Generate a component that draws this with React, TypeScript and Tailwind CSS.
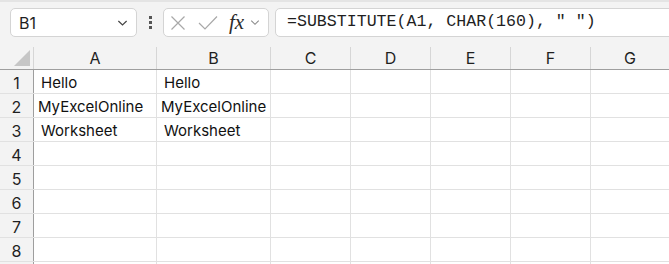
import React from 'react';

// ── Sheet data ──────────────────────────────────────────────────────────────

const columns = [
    { key: 'A', width: 'w-[123px]' },
    { key: 'B', width: 'w-[114px]' },
    { key: 'C', width: 'w-[80px]' },
    { key: 'D', width: 'w-[80px]' },
    { key: 'E', width: 'w-[80px]' },
    { key: 'F', width: 'w-[80px]' },
    { key: 'G', width: 'flex-1' },
];

// lead = text starts with a non-breaking space (CHAR(160))
const cells: Record<number, { text: string; lead?: boolean }[]> = {
    1: [{ text: 'Hello', lead: true }, { text: 'Hello', lead: true }],
    2: [{ text: 'MyExcelOnline' }, { text: 'MyExcelOnline' }],
    3: [{ text: 'Worksheet', lead: true }, { text: 'Worksheet', lead: true }],
};

const rows = [1, 2, 3, 4, 5, 6, 7, 8];

const sans = "font-['Inter','Noto_Sans',sans-serif]";

function Chevron({ className }: { className?: string }) {
    return (
        <svg viewBox="0 0 12 8" className={className} fill="none" stroke="currentColor" strokeWidth="1.3">
            <path d="M1.5 1.8 L6 6.2 L10.5 1.8" />
        </svg>
    );
}

// ── Formula bar ─────────────────────────────────────────────────────────────

function FormulaBar() {
    return (
        <div className="h-[45px] bg-[#f3f3f3] pt-[6px]">
            <div className="flex h-[29px] items-center pl-[10px]">
                <div className="flex h-[29px] w-[127px] items-center justify-between rounded-[5px] border border-[#d4d4d4] bg-white pl-[8px] pr-[8px]">
                    <span className={`${sans} text-[16px] text-[#1f1f1f]`}>B1</span>
                    <Chevron className="h-[8px] w-[11px] text-[#444]" />
                </div>
                <div className="flex w-[26px] flex-col items-center justify-center gap-[2px]">
                    <span className="h-[3px] w-[3px] bg-[#555]" />
                    <span className="h-[3px] w-[3px] bg-[#555]" />
                    <span className="h-[3px] w-[3px] bg-[#555]" />
                </div>
                <div className="flex h-[29px] w-[106px] items-center rounded-[5px] border border-[#d4d4d4] bg-white pl-[6px]">
                    <svg viewBox="0 0 16 16" className="h-[16px] w-[16px] text-[#a8a8a8]" fill="none" stroke="currentColor" strokeWidth="1.2">
                        <path d="M1.5 1.5 L14.5 14.5 M14.5 1.5 L1.5 14.5" />
                    </svg>
                    <svg viewBox="0 0 20 16" className="ml-[12px] h-[16px] w-[20px] text-[#a8a8a8]" fill="none" stroke="currentColor" strokeWidth="1.2">
                        <path d="M1 8 L7 14 L19 1.5" />
                    </svg>
                    <span className="ml-[11px] font-['Liberation_Serif',serif] text-[21px] italic leading-none text-[#2b2b2b]">fx</span>
                    <Chevron className="ml-[6px] h-[7px] w-[10px] text-[#8a8a8a]" />
                </div>
                <div className="ml-[6px] mr-[-6px] flex h-[29px] flex-1 items-center rounded-[5px] border border-[#d4d4d4] bg-white pl-[11px]">
                    <span className="font-['Liberation_Mono',monospace] text-[16.6px] text-[#1f1f1f]">
                        =SUBSTITUTE(A1, CHAR(160), " ")
                    </span>
                </div>
            </div>
        </div>
    );
}

// ── Grid ────────────────────────────────────────────────────────────────────

export default function App() {
    return (
        <div className="h-[264px] w-[669px] overflow-hidden bg-white">
            <div className="h-[2px] bg-[#e4e4e4]" />
            <FormulaBar />

            {/* Column headers */}
            <div className="flex h-[23px] border-b border-[#9e9e9e] bg-[#f3f3f3]">
                <div className="relative w-[34px] shrink-0 border-r border-[#d6d6d6]">
                    <svg viewBox="0 0 16 16" className="absolute bottom-[3px] right-[3px] h-[16px] w-[16px]">
                        <path d="M16 0 L16 16 L0 16 Z" fill="#c6c6c6" />
                    </svg>
                </div>
                {columns.map((c) => (
                    <div
                        key={c.key}
                        className={`${c.width} ${c.key !== 'G' ? 'shrink-0 border-r border-[#d6d6d6]' : ''} flex items-center justify-center ${sans} text-[16px] text-[#1f1f1f]`}
                    >
                        {c.key}
                    </div>
                ))}
            </div>

            {/* Rows */}
            {rows.map((r) => (
                <div key={r} className="flex h-[24px] border-b border-[#e1e1e1]">
                    <div className={`flex w-[34px] shrink-0 items-center justify-center border-r border-[#9e9e9e] bg-[#f3f3f3] pt-[3px] ${sans} text-[16px] text-[#1f1f1f]`}>
                        {r}
                    </div>
                    {columns.map((c, i) => {
                        const cell = cells[r]?.[i];
                        return (
                            <div
                                key={c.key}
                                className={`${c.width} ${c.key !== 'G' ? 'shrink-0 border-r border-[#e1e1e1]' : ''} flex items-center overflow-hidden whitespace-nowrap pl-[4px] pt-[4px] ${sans} text-[15px] text-[#111]`}
                            >
                                {cell?.lead && <span className="inline-block w-[3px]">{'\u00a0'}</span>}
                                {cell?.text ?? ''}
                            </div>
                        );
                    })}
                </div>
            ))}

            {/* Partial row 9 */}
            <div className="flex h-[10px]">
                <div className="w-[34px] shrink-0 border-r border-[#9e9e9e] bg-[#f3f3f3]" />
                {columns.map((c) => (
                    <div key={c.key} className={`${c.width} ${c.key !== 'G' ? 'shrink-0 border-r border-[#e1e1e1]' : ''}`} />
                ))}
            </div>
        </div>
    );
}
